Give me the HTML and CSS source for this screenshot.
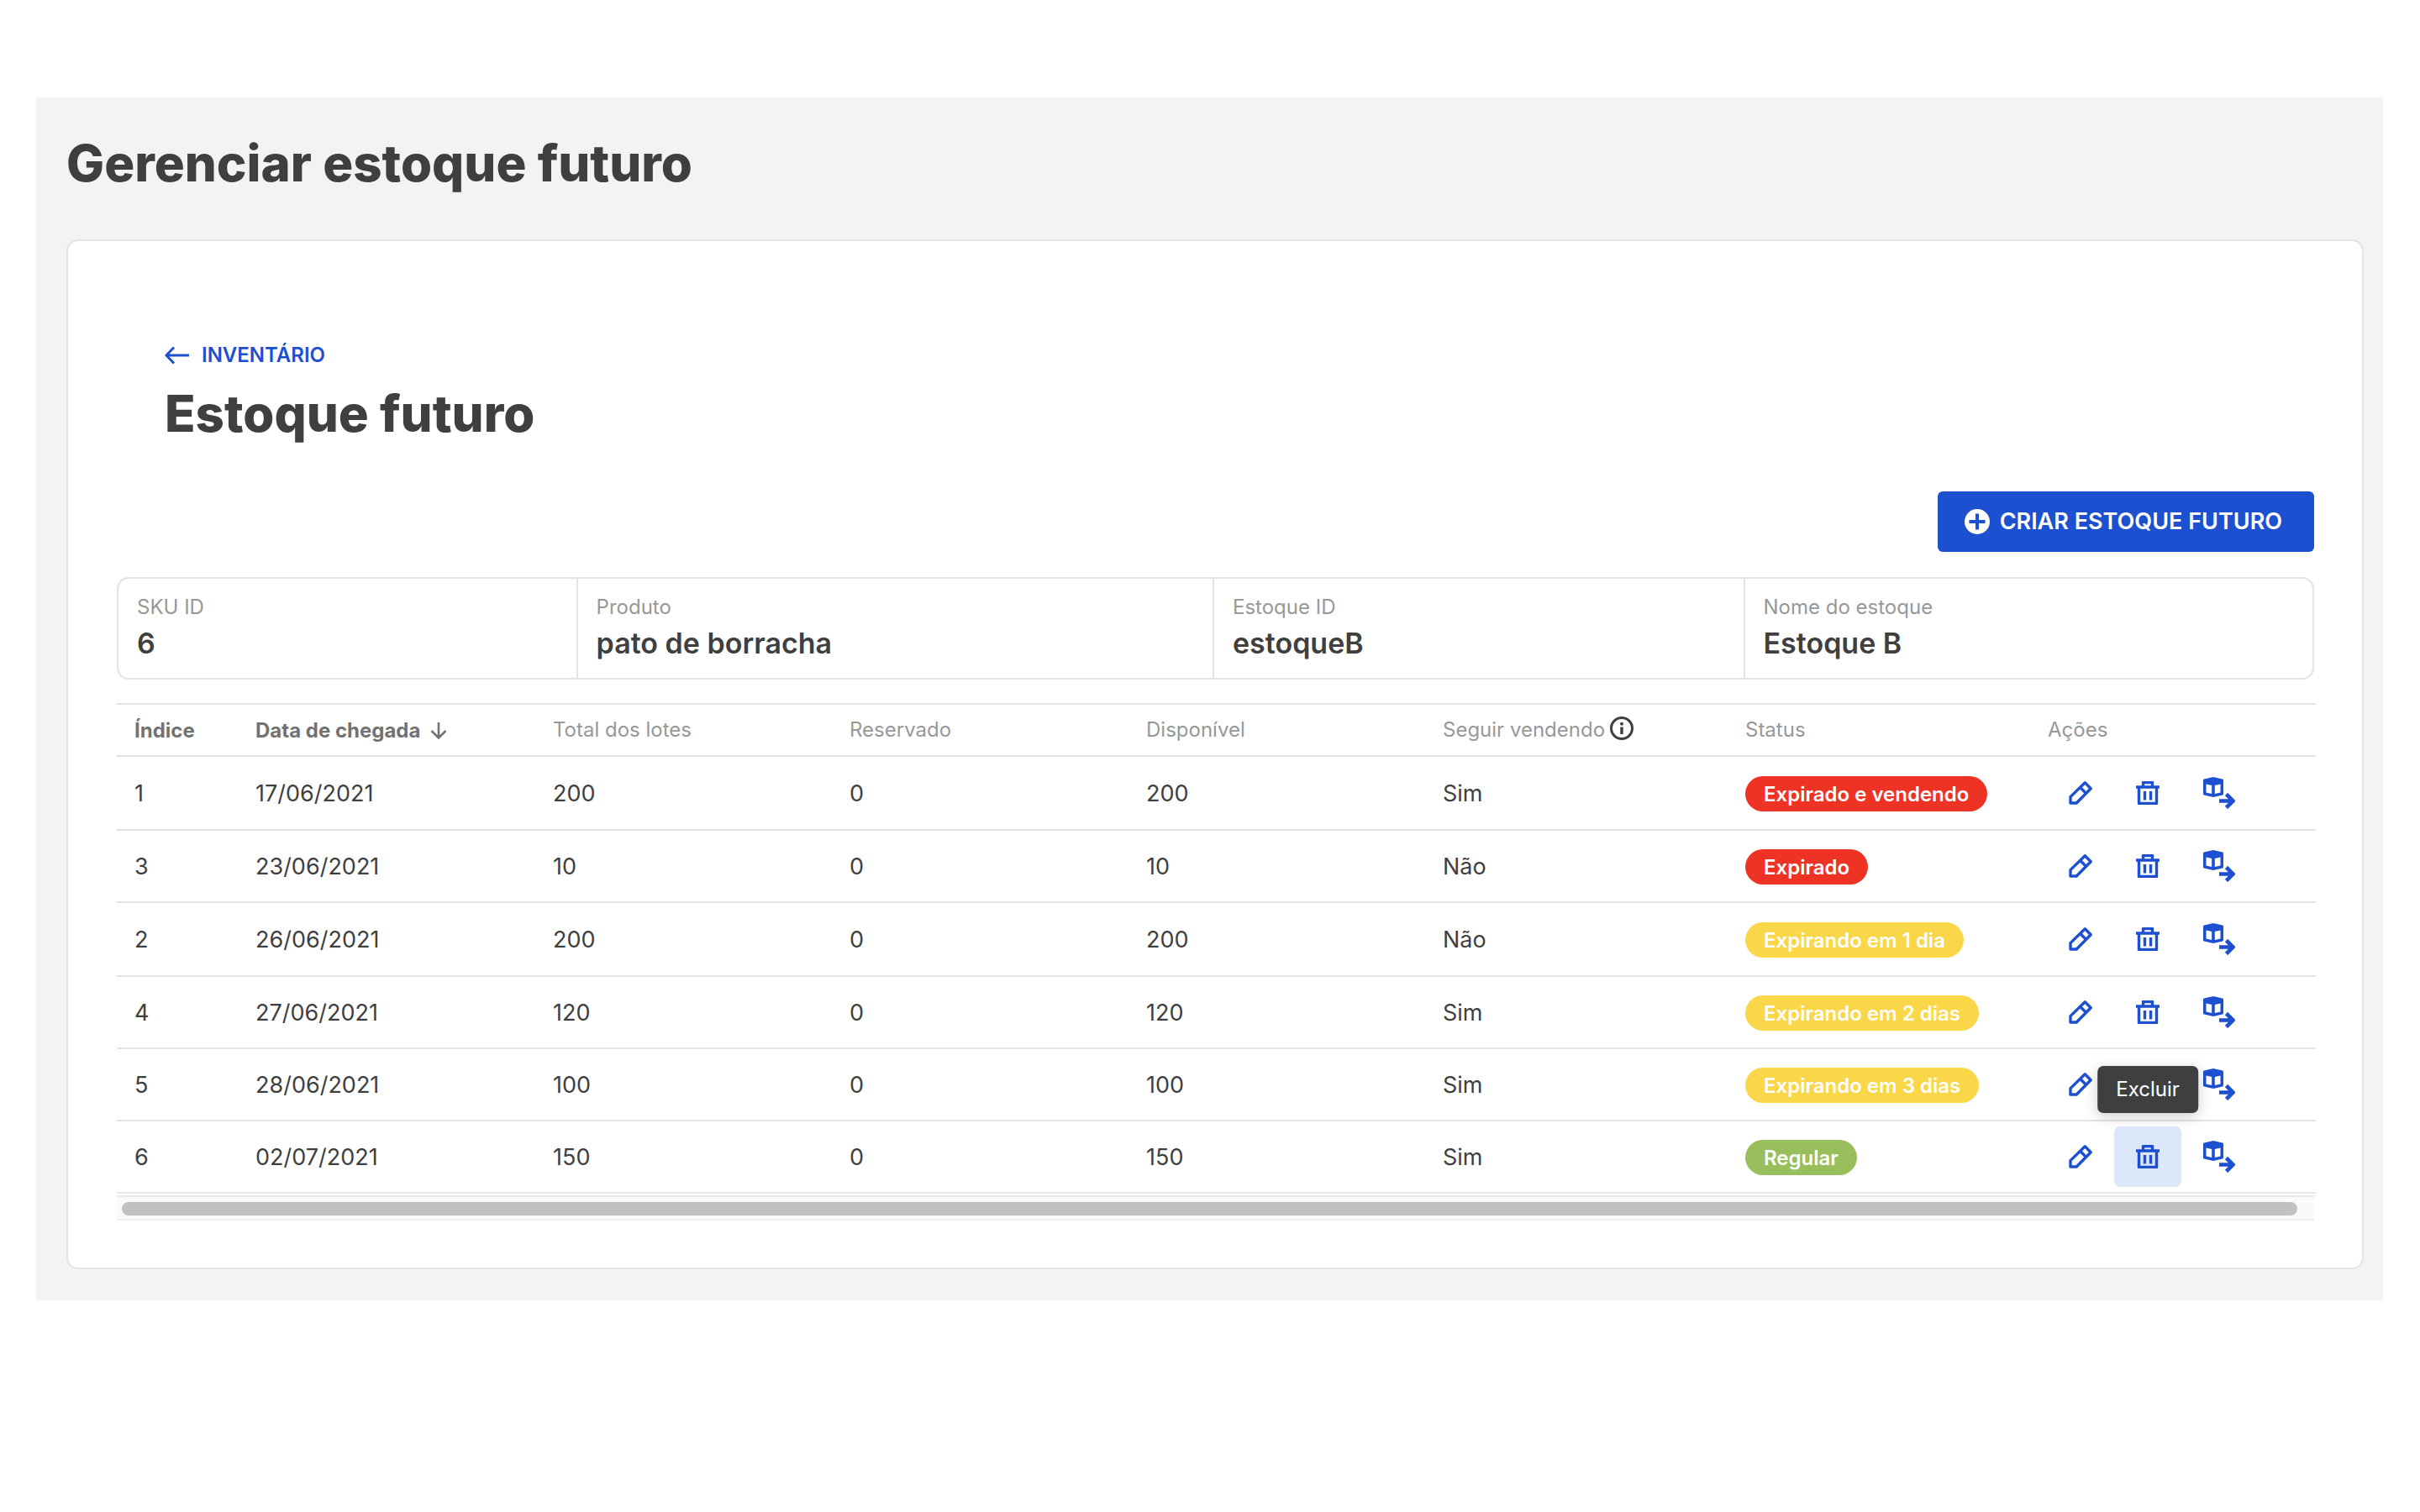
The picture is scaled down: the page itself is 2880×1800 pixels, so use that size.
FILE: index.html
```html
<!DOCTYPE html>
<html lang="pt-BR">
<head>
<meta charset="utf-8">
<meta name="viewport" content="width=device-width, initial-scale=1">
<title>Gerenciar estoque futuro</title>
<link rel="stylesheet" href="styles.css">
</head>
<body>
<svg class="sprite" aria-hidden="true">
  <symbol id="icon-edit" viewBox="0 0 28 28">
    <path d="M2 18.6 19.3 1.8 26.2 8.7 9.2 26H2zM14 7.800l6.200 6.200" fill="none" stroke="currentColor" stroke-width="3.400" stroke-linejoin="round"/>
  </symbol>
  <symbol id="icon-trash" viewBox="0 0 28 28">
    <path d="M0 7h28M8.500 7V1.500h11V7M3.500 7v19.500h21V7" fill="none" stroke="currentColor" stroke-width="3.400" stroke-linejoin="round"/>
    <path d="M10.500 12v10.500M17.500 12v10.500" fill="none" stroke="currentColor" stroke-width="3.400"/>
  </symbol>
  <symbol id="icon-move" viewBox="0 0 38 38">
    <path fill="currentColor" fill-rule="evenodd" d="M12 0 23 2.600Q24 3 24 4V20Q24 21.200 23 21.500L12 24 1 21.500Q0 21.200 0 20V4Q0 3 1 2.600zM3.500 8.500V18.400L10.200 20V10zM20.500 8.500V18.400L13.800 20V10z"/>
    <path d="M19 28.500h16M27.500 20.500l8 8-8 8" fill="none" stroke="currentColor" stroke-width="4.600"/>
  </symbol>
</svg>
<main class="page">
  <h1 class="title">Gerenciar estoque futuro</h1>
  <section class="card">
    <header class="card-head">
      <a class="back" href="#inventario">
        <svg class="back-icon" viewBox="0 0 30 22" aria-hidden="true"><path d="M29 11H2M11 1.500 2 11l9 9.500" fill="none" stroke="currentColor" stroke-width="3"/></svg>
        INVENTÁRIO
      </a>
      <h2 class="title">Estoque futuro</h2>
    </header>
    <div class="toolbar">
      <button class="create" type="button">
        <svg class="create-icon" viewBox="0 0 30 30" aria-hidden="true"><circle cx="15" cy="15" r="15" fill="#fff"/><path d="M15 5.500v19M5.500 15h19" stroke="#1d50d0" stroke-width="4"/></svg>
        CRIAR ESTOQUE FUTURO
      </button>
    </div>
    <dl class="summary">
      <div class="fact"><dt>SKU ID</dt><dd>6</dd></div>
      <div class="fact"><dt>Produto</dt><dd>pato de borracha</dd></div>
      <div class="fact"><dt>Estoque ID</dt><dd>estoqueB</dd></div>
      <div class="fact"><dt>Nome do estoque</dt><dd>Estoque B</dd></div>
    </dl>
    <table class="stock">
      <colgroup><col class="c-index"><col class="c-date"><col class="c-num"><col class="c-num"><col class="c-num"><col class="c-wide"><col class="c-wide"><col class="c-actions"></colgroup>
      <thead>
        <tr>
          <th class="sorted" scope="col">Índice</th>
          <th class="sorted" scope="col" aria-sort="ascending">Data de chegada<svg class="sort-icon" viewBox="0 0 20 20" aria-hidden="true"><path d="M10 0v18M1.500 10l8.500 8.500 8.500-8.500" fill="none" stroke="currentColor" stroke-width="2.600"/></svg></th>
          <th scope="col">Total dos lotes</th>
          <th scope="col">Reservado</th>
          <th scope="col">Disponível</th>
          <th scope="col">Seguir vendendo<svg class="info-icon" viewBox="0 0 28 28" aria-hidden="true"><circle cx="14" cy="14" r="12.500" fill="none" stroke="currentColor" stroke-width="3"/><circle cx="14" cy="8.800" r="2" fill="currentColor"/><path d="M14 12.500v8.500" stroke="currentColor" stroke-width="3.400"/></svg></th>
          <th scope="col">Status</th>
          <th scope="col">Ações</th>
        </tr>
      </thead>
      <tbody>
        <tr>
          <td>1</td><td>17/06/2021</td><td>200</td><td>0</td><td>200</td><td>Sim</td>
          <td><span class="tag danger">Expirado e vendendo</span></td>
          <td class="actions"><div class="action-list"><button type="button" aria-label="Editar"><svg class="icon"><use href="#icon-edit"/></svg></button><button type="button" aria-label="Excluir"><svg class="icon"><use href="#icon-trash"/></svg></button><button type="button" aria-label="Transferir"><svg class="icon big"><use href="#icon-move"/></svg></button></div></td>
        </tr>
        <tr>
          <td>3</td><td>23/06/2021</td><td>10</td><td>0</td><td>10</td><td>Não</td>
          <td><span class="tag danger">Expirado</span></td>
          <td class="actions"><div class="action-list"><button type="button" aria-label="Editar"><svg class="icon"><use href="#icon-edit"/></svg></button><button type="button" aria-label="Excluir"><svg class="icon"><use href="#icon-trash"/></svg></button><button type="button" aria-label="Transferir"><svg class="icon big"><use href="#icon-move"/></svg></button></div></td>
        </tr>
        <tr>
          <td>2</td><td>26/06/2021</td><td>200</td><td>0</td><td>200</td><td>Não</td>
          <td><span class="tag warning">Expirando em 1 dia</span></td>
          <td class="actions"><div class="action-list"><button type="button" aria-label="Editar"><svg class="icon"><use href="#icon-edit"/></svg></button><button type="button" aria-label="Excluir"><svg class="icon"><use href="#icon-trash"/></svg></button><button type="button" aria-label="Transferir"><svg class="icon big"><use href="#icon-move"/></svg></button></div></td>
        </tr>
        <tr>
          <td>4</td><td>27/06/2021</td><td>120</td><td>0</td><td>120</td><td>Sim</td>
          <td><span class="tag warning">Expirando em 2 dias</span></td>
          <td class="actions"><div class="action-list"><button type="button" aria-label="Editar"><svg class="icon"><use href="#icon-edit"/></svg></button><button type="button" aria-label="Excluir"><svg class="icon"><use href="#icon-trash"/></svg></button><button type="button" aria-label="Transferir"><svg class="icon big"><use href="#icon-move"/></svg></button></div></td>
        </tr>
        <tr>
          <td>5</td><td>28/06/2021</td><td>100</td><td>0</td><td>100</td><td>Sim</td>
          <td><span class="tag warning">Expirando em 3 dias</span></td>
          <td class="actions"><div class="action-list"><button type="button" aria-label="Editar"><svg class="icon"><use href="#icon-edit"/></svg></button><button type="button" aria-label="Excluir"><svg class="icon"><use href="#icon-trash"/></svg></button><button type="button" aria-label="Transferir"><svg class="icon big"><use href="#icon-move"/></svg></button></div></td>
        </tr>
        <tr>
          <td>6</td><td>02/07/2021</td><td>150</td><td>0</td><td>150</td><td>Sim</td>
          <td><span class="tag success">Regular</span></td>
          <td class="actions"><div class="action-list"><button type="button" aria-label="Editar"><svg class="icon"><use href="#icon-edit"/></svg></button><button class="hovered" type="button" aria-describedby="tip"><svg class="icon" role="img" aria-label="Excluir"><use href="#icon-trash"/></svg><span class="tooltip" id="tip" role="tooltip">Excluir</span></button><button type="button" aria-label="Transferir"><svg class="icon big"><use href="#icon-move"/></svg></button></div></td>
        </tr>
      </tbody>
    </table>
    <div class="scroll-track"><div class="scroll-thumb"></div></div>
  </section>
</main>
</body>
</html>
```
FILE: styles.css
```css
* { box-sizing: border-box; }

body {
  margin: 0;
  background: #fff;
  color: #3f3f40;
  font-family: Inter, "Noto Sans", sans-serif;
  font-size: 27px;
  line-height: 32px;
}

.sprite { display: none; }

.page {
  margin: 116px 44px 0 43px;
  padding: 42px 23px 37px 36px;
  background: #f2f3f5;
}

.title {
  margin: 0;
  font-size: 60px;
  line-height: 72px;
  font-weight: 800;
}

.card {
  margin-top: 55px;
  padding: 120px 57px 56px 58px;
  border: 2px solid #e3e4e6;
  border-radius: 14px;
  background: #fff;
}

.card-head { padding-left: 57px; }

.back {
  display: inline-flex;
  align-items: center;
  gap: 14px;
  color: #1d50d0;
  font-size: 24px;
  font-weight: 600;
  text-decoration: none;
}

.back-icon { width: 30px; height: 22px; }

.card-head .title { margin-top: 15px; }

.toolbar {
  display: flex;
  justify-content: flex-end;
  margin-top: 57px;
}

button {
  border: 0;
  font: inherit;
  cursor: pointer;
}

.create {
  display: flex;
  align-items: center;
  gap: 12px;
  height: 72px;
  padding: 0 38px 0 32px;
  border-radius: 6px;
  background: #1d50d0;
  color: #fff;
  font-size: 27px;
  font-weight: 600;
}

.create-icon { width: 30px; height: 30px; }

.summary {
  display: grid;
  grid-template-columns: 545fr 758fr 632fr 678fr;
  margin: 30px 0 28px;
  border: 2px solid #e3e4e6;
  border-radius: 14px;
}

.fact { padding: 18px 22px 20px; }
.fact + .fact { border-left: 2px solid #e3e4e6; }
.fact dt { color: #979899; font-size: 24px; }
.fact dd { margin: 6px 0 0; font-size: 34px; line-height: 42px; font-weight: 600; }

.stock {
  width: 100%;
  table-layout: fixed;
  border-collapse: separate;
  border-spacing: 0;
}

.c-index { width: 144px; }
.c-date { width: 354px; }
.c-num { width: 353px; }
.c-wide { width: 360px; }
.c-actions { width: 340px; }

th, td {
  padding: 0 21px;
  border-bottom: 2px solid #e3e4e6;
  text-align: left;
  vertical-align: middle;
  white-space: nowrap;
}

th {
  height: 64px;
  border-top: 2px solid #e3e4e6;
  color: #979899;
  font-size: 24px;
  font-weight: 400;
}

th.sorted { padding-top: 2px; color: #727273; font-weight: 700; }

td { height: 86px; padding-top: 2px; }
tr:nth-child(-2n+3) td { height: 88px; }
td.actions { padding: 0 20px; }

.sort-icon { width: 20px; height: 20px; margin-left: 12px; vertical-align: -2px; }
.info-icon { width: 28px; height: 28px; margin-left: 6px; color: #3f3f40; vertical-align: -4px; }

.tag {
  display: inline-block;
  height: 42px;
  padding: 0 22px;
  border-radius: 21px;
  color: #fff;
  font-size: 24px;
  line-height: 44px;
  font-weight: 600;
  vertical-align: middle;
}

.danger { background: #ee3224; }
.warning { background: #fad749; }
.success { background: #98bf5c; }

.action-list { display: flex; }

.action-list button {
  position: relative;
  display: flex;
  align-items: center;
  height: 72px;
  padding: 0 26px;
  border-radius: 7px;
  background: none;
  color: #1d50d0;
}

.action-list .hovered { background: #dce7fa; }

.icon { width: 28px; height: 28px; }
.icon.big { width: 38px; height: 38px; }

.tooltip {
  position: absolute;
  bottom: 88px;
  left: 50%;
  transform: translateX(-50%);
  padding: 12px 22px;
  border-radius: 7px;
  background: #3f3f40;
  box-shadow: 0 4px 16px rgba(0, 0, 0, 0.2);
  color: #fff;
  font-size: 24px;
}

.scroll-track {
  height: 30px;
  margin-top: 2px;
  padding: 6px 20px 0 6px;
  border-top: 2px solid #e8e8e8;
  border-bottom: 2px solid #ededed;
  background: #fafafa;
}

.scroll-thumb { height: 16px; border-radius: 8px; background: #c1c1c1; }
```
